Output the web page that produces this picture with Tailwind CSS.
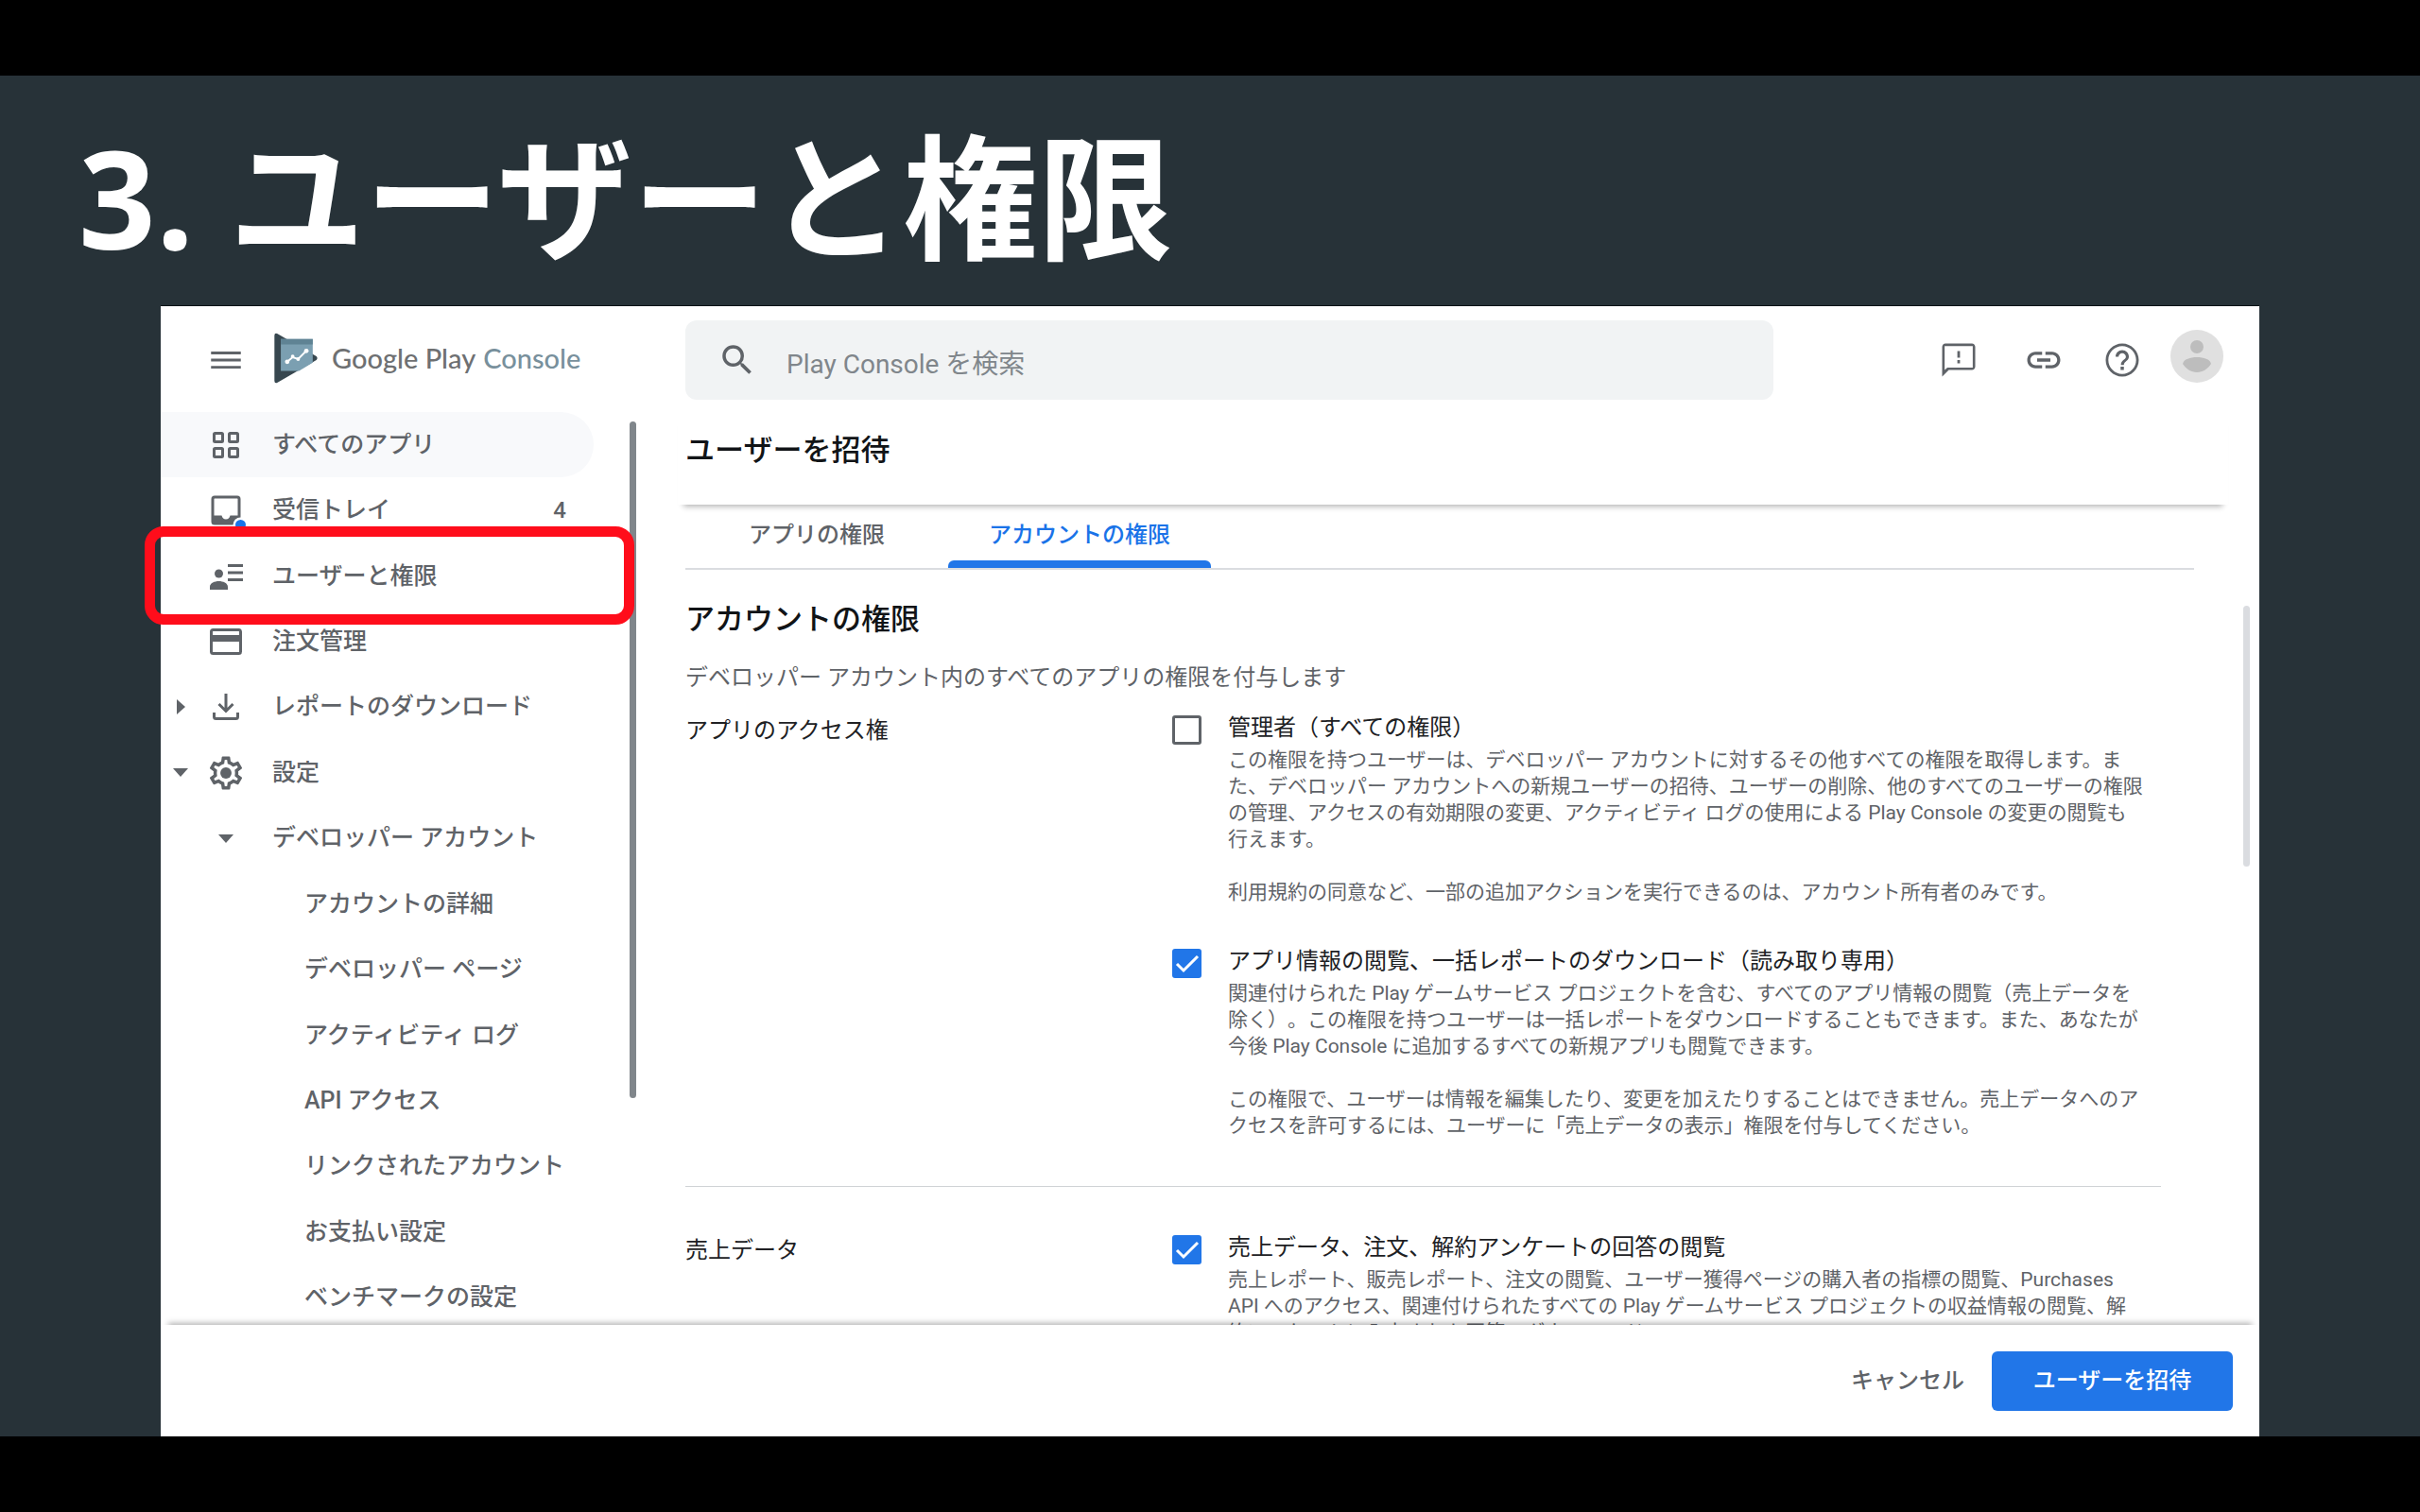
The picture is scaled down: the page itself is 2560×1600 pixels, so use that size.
<!DOCTYPE html>
<html lang="ja">
<head>
<meta charset="utf-8">
<meta name="viewport" content="width=device-width, initial-scale=1">
<title>ユーザーと権限</title>
<script src="https://cdn.jsdelivr.net/npm/@tailwindcss/browser@4"></script>
</head>
<body class="flex h-screen flex-col overflow-hidden bg-black py-20 font-['Roboto','Noto_Sans_CJK_JP',sans-serif] text-[#5f6368] [text-spacing-trim:space-all]">
<div class="flex min-h-0 flex-1 flex-col bg-[#273238]">
  <h1 class="h-[243px] shrink-0 pl-[83px] font-['Open_Sans','Noto_Sans_CJK_JP',sans-serif] text-[143px] leading-[258px] font-bold whitespace-nowrap text-white">3. ユーザーと権限</h1>

  <div class="mx-[170px] flex min-h-0 flex-1 flex-col border-t border-[#0c1216] bg-white">
    <header class="flex h-28 shrink-0 items-center pt-[2px]">
      <div class="flex w-[555px] shrink-0 items-center pl-[48px]">
        <button type="button" aria-label="メニュー"><svg class="size-[42px] fill-[#5f6368]" viewBox="0 0 24 24"><path d="M3 17.2h18v-1.7H3zM3 12.9h18v-1.7H3zM3 6.9v1.7h18V6.9z"/></svg></button>
        <a href="#" class="mb-1 ml-[28px] flex items-center font-['Lato','Noto_Sans_CJK_JP',sans-serif] text-[29px] leading-[40px] font-medium whitespace-nowrap text-[#6e7072]">
          <svg class="mr-[14px] h-[54px] w-[49px]" viewBox="0 0 50 56">
            <path d="M2 3Q2 0 5 1L48 26Q50 28 48 30L5 55Q2 56 2 53Z" fill="#37474f"/>
            <path d="M9 7h35v26L29 42H9z" fill="#7b9fb1"/><path d="M9 7h35v6H9z" fill="#5f8394"/>
            <path d="M16 32l6-5 6 2 9-9" fill="none" stroke="#fff" stroke-width="2"/>
            <g fill="#fff"><circle cx="16" cy="32" r="2.5"/><circle cx="22" cy="26" r="2"/><circle cx="28" cy="29" r="2"/><circle cx="37" cy="20" r="2.5"/></g>
          </svg>Google Play<span class="ml-2 text-[#78909c]">Console</span></a>
      </div>
      <label class="flex h-[84px] min-w-0 flex-1 items-center rounded-xl bg-[#f1f3f4] pl-[34px]">
        <svg class="size-[42px] shrink-0 fill-[#5f6368]" viewBox="0 0 24 24"><path d="M15.5 14h-.79l-.28-.27A6.47 6.47 0 0 0 16 9.5 6.5 6.5 0 1 0 9.500 16c1.610 0 3.090-.59 4.230-1.570l.27.280v.79l5 4.990L20.490 19l-4.990-5zm-6 0C7.010 14 5 11.990 5 9.500S7.010 5 9.500 5 14 7.010 14 9.500 11.990 14 9.500 14z"/></svg>
        <input type="search" placeholder="Play Console を検索" class="mt-[10px] ml-[31px] min-w-0 flex-1 bg-transparent text-[28px] leading-[40px] outline-none placeholder:text-[#80868b]">
      </label>
      <div class="flex w-[514px] shrink-0 items-center fill-[#5f6368] pl-[175px]">
        <button type="button" aria-label="フィードバック"><svg class="size-[42px]" viewBox="0 0 24 24"><path d="M20 2H4c-1.100 0-1.990.9-1.990 2L2 22l4-4h14c1.100 0 2-.9 2-2V4c0-1.100-.9-2-2-2zm0.500 14.500H5.170L3.500 18V3.500h17zM11.200 12h1.600v2h-1.600zm0-5.500h1.600v4h-1.600z"/></svg></button>
        <button type="button" aria-label="リンク" class="ml-[48px]"><svg class="size-[42px]" viewBox="0 0 24 24"><path d="M3.900 12c0-1.710 1.390-3.100 3.100-3.100h4V7H7c-2.760 0-5 2.240-5 5s2.240 5 5 5h4v-1.900H7c-1.710 0-3.100-1.390-3.100-3.100zM8 13h8v-2H8v2zm9-6h-4v1.900h4c1.710 0 3.100 1.390 3.100 3.100s-1.390 3.100-3.100 3.100h-4V17h4c2.760 0 5-2.240 5-5s-2.240-5-5-5z"/></svg></button>
        <button type="button" aria-label="ヘルプ" class="ml-[41px]"><svg class="size-[42px]" viewBox="0 0 24 24"><path d="M11 18h2v-2h-2v2zm1-16C6.480 2 2 6.480 2 12s4.480 10 10 10 10-4.480 10-10S17.520 2 12 2zm0 18.400c-4.600 0-8.400-3.800-8.400-8.400S7.400 3.600 12 3.600s8.400 3.800 8.400 8.400-3.800 8.400-8.400 8.400zM12 6c-2.210 0-4 1.790-4 4h1.800c0-1.200.98-2.200 2.200-2.200s2.200 1 2.200 2.200c0 2-3 1.750-3 5h1.800c0-2.250 3-2.500 3-5 0-2.210-1.790-4-4-4z"/></svg></button>
        <button type="button" aria-label="アカウント" class="mb-2 ml-[30px]"><svg class="size-[56px]" viewBox="0 0 56 56"><circle cx="28" cy="28" r="28" fill="#e0e0e0"/><g fill="#bdbdbd"><circle cx="28" cy="18" r="7"/><path d="M13 36c1-5 8-7 15-7s14 2 15 7c-3 5-9 9-15 9s-12-4-15-9z"/></g></svg></button>
      </div>
    </header>

    <div class="flex min-h-0 flex-1">
      <aside class="flex w-[555px] shrink-0">
        <nav class="grid h-[972px] w-[458px] auto-rows-fr text-[25px] leading-[36px] font-medium whitespace-nowrap">
          <a href="#" class="grid grid-cols-[42px_54px_1fr] items-center rounded-r-full bg-[#f8f9fb]"><span></span>
            <svg class="mx-auto size-[28px] fill-none stroke-[#5f6368] stroke-3" viewBox="0 0 28 28"><rect x="1.500" y="1.500" width="9" height="9" rx="1"/><rect x="17.500" y="1.500" width="9" height="9" rx="1"/><rect x="1.500" y="17.500" width="9" height="9" rx="1"/><rect x="17.500" y="17.500" width="9" height="9" rx="1"/></svg>
            <span class="pl-[22px]">すべてのアプリ</span></a>
          <a href="#" class="grid grid-cols-[42px_54px_1fr_auto] items-center"><span></span>
            <svg class="mx-auto size-[42px]" viewBox="-5.500 -5.500 42 42"><rect x="1.500" y="1.500" width="28" height="28" rx="2" fill="none" stroke="#5f6368" stroke-width="3"/><path d="M2 21h9q1 4 4.500 4t4.500-4h9v8H2z" fill="#5f6368"/><circle cx="31" cy="31" r="8" fill="#fff"/><circle cx="31" cy="31" r="5.500" fill="#1a73e8"/></svg>
            <span class="pl-[22px]">受信トレイ</span><span class="pr-[29px] text-[24px]">4</span></a>
          <a href="#" class="relative grid grid-cols-[42px_54px_1fr] items-center"><span></span>
            <svg class="mx-auto h-[28px] w-[35px] fill-[#5f6368]" viewBox="0 0 35 28"><circle cx="9.500" cy="11" r="4.500"/><path d="M0 28v-3c0-4 5-6 9.500-6s9.500 2 9.500 6v3zM19 1h16v3H19zM19 8.500h16v3H19zM19 16h16v3H19z"/></svg>
            <span class="pl-[22px]">ユーザーと権限</span>
            <span class="absolute -top-[18px] -left-[17px] z-10 h-[104px] w-[518px] rounded-[20px] border-[11px] border-[#ff0d1b]"></span></a>
          <a href="#" class="grid grid-cols-[42px_54px_1fr] items-center"><span></span>
            <svg class="mx-auto h-[28px] w-[34px]" viewBox="0 0 34 28"><rect x="1.500" y="1.500" width="31" height="25" rx="2" fill="none" stroke="#5f6368" stroke-width="3"/><path d="M2 7h30v7H2z" fill="#5f6368"/></svg>
            <span class="pl-[22px]">注文管理</span></a>
          <a href="#" class="grid grid-cols-[42px_54px_1fr] items-center">
            <svg class="mx-auto h-4 w-[9px] fill-[#5f6368]" viewBox="0 0 9 16"><path d="M0 0l9 8-9 8z"/></svg>
            <svg class="mx-auto size-[28px] fill-none stroke-[#5f6368] stroke-3" viewBox="0 0 28 28"><path d="M14 0v17M6.500 11l7.500 7.500L21.500 11M1.500 20v4.500q0 2 2 2h21q2 0 2-2V20"/></svg>
            <span class="pl-[22px]">レポートのダウンロード</span></a>
          <a href="#" class="grid grid-cols-[42px_54px_1fr] items-center">
            <svg class="mx-auto h-[9px] w-4 fill-[#5f6368]" viewBox="0 0 16 9"><path d="M0 0h16L8 9z"/></svg>
            <svg class="mx-auto size-[42px] fill-[#5f6368]" viewBox="0 0 24 24"><circle cx="12" cy="12" r="3.400"/><path d="M19.430 12.980c.04-.32.07-.64.07-.98s-.03-.66-.07-.98l2.110-1.650c.19-.15.24-.42.12-.64l-2-3.460c-.09-.16-.26-.25-.44-.25-.06 0-.12.010-.17.030l-2.490 1c-.52-.4-1.080-.73-1.690-.98l-.38-2.650C14.460 2.180 14.250 2 14 2h-4c-.25 0-.46.18-.49.42l-.38 2.650c-.61.25-1.170.59-1.690.98l-2.490-1c-.06-.02-.12-.03-.18-.03-.17 0-.34.09-.43.25l-2 3.460c-.13.22-.07.49.12.64l2.110 1.650c-.04.32-.07.65-.07.98s.03.66.07.98l-2.110 1.650c-.19.15-.24.42-.12.64l2 3.460c.09.16.26.25.44.25.06 0 .12-.01.17-.03l2.490-1c.52.4 1.080.73 1.690.98l.38 2.650c.03.24.24.42.49.42h4c.25 0 .46-.18.49-.42l.38-2.650c.61-.25 1.170-.59 1.690-.98l2.490 1c.06.02.12.03.18.03.17 0 .34-.09.43-.25l2-3.460c.12-.22.07-.49-.12-.64l-2.110-1.650zm-1.980-1.710c.04.31.05.52.05.73 0 .21-.02.43-.05.73l-.14 1.130.89.7 1.080.84-.7 1.210-1.270-.51-1.040-.42-.9.68c-.43.32-.84.56-1.250.73l-1.060.43-.16 1.130-.2 1.350h-1.400l-.19-1.350-.16-1.130-1.060-.43c-.43-.18-.83-.41-1.230-.71l-.91-.7-1.060.43-1.270.51-.7-1.210 1.080-.84.89-.7-.14-1.130c-.03-.31-.05-.54-.05-.74s.02-.43.05-.73l.14-1.130-.89-.7-1.080-.84.7-1.210 1.270.51 1.040.42.9-.68c.43-.32.84-.56 1.250-.73l1.060-.43.16-1.130.2-1.350h1.390l.19 1.350.16 1.130 1.060.43c.43.18.83.41 1.230.71l.91.7 1.060-.43 1.270-.51.7 1.210-1.070.85-.89.7.14 1.130z"/></svg>
            <span class="pl-[22px]">設定</span></a>
          <a href="#" class="grid grid-cols-[42px_54px_1fr] items-center"><span></span>
            <svg class="mx-auto h-[9px] w-4 fill-[#5f6368]" viewBox="0 0 16 9"><path d="M0 0h16L8 9z"/></svg>
            <span class="pl-[22px]">デベロッパー アカウント</span></a>
          <a href="#" class="flex items-center pl-[152px]">アカウントの詳細</a>
          <a href="#" class="flex items-center pl-[152px]">デベロッパー ページ</a>
          <a href="#" class="flex items-center pl-[152px]">アクティビティ ログ</a>
          <a href="#" class="flex items-center pl-[152px]">API アクセス</a>
          <a href="#" class="flex items-center pl-[152px]">リンクされたアカウント</a>
          <a href="#" class="flex items-center pl-[152px]">お支払い設定</a>
          <a href="#" class="flex items-center pl-[152px]">ベンチマークの設定</a>
        </nav>
        <div class="mt-[10px] ml-[38px] h-[716px] w-[7px] rounded-full bg-[#80868b]"></div>
      </aside>

      <main class="min-w-0 flex-1 pr-[69px] whitespace-nowrap">
        <div class="-mr-[36px] -ml-2 h-[98px] bg-white pt-[18px] pl-2 shadow-[0_8px_6px_-6px_rgba(0,0,0,0.3)]">
          <h2 class="text-[31px] leading-[46px] font-medium text-[#111417]">ユーザーを招待</h2>
        </div>
        <div role="tablist" class="flex h-[69px] border-b-2 border-[#dadce0] text-[24px] leading-[36px] font-medium">
          <button type="button" role="tab" aria-selected="false" class="flex w-[278px] justify-center pt-[14px]">アプリの権限</button>
          <button type="button" role="tab" aria-selected="true" class="flex w-[278px] flex-col items-center justify-between pt-[14px] text-[#1a73e8]">アカウントの権限<span class="h-2 w-full rounded-t-md bg-[#2176e8]"></span></button>
        </div>

        <div class="flex">
          <div class="min-w-0 flex-1">
            <h3 class="mt-[30px] text-[31px] leading-[46px] font-medium text-[#111417]">アカウントの権限</h3>
            <p class="mt-[22px] text-[24px] leading-[32px]">デベロッパー アカウント内のすべてのアプリの権限を付与します</p>

            <section class="mr-[35px] grid grid-cols-[515px_1fr] border-b border-[#d0d3d6] pt-[21px] pb-[50px]">
              <h4 class="pt-[3px] text-[24px] leading-[32px] text-[#202124]">アプリのアクセス権</h4>
              <div class="grid gap-[43px]">
                <div class="grid grid-cols-[31px_1fr] gap-x-[28px]">
                  <input id="admin" type="checkbox" class="mt-[3px] size-[31px] appearance-none rounded-[3px] border-3 border-[#5f6368]">
                  <div>
                    <label for="admin" class="block text-[24px] leading-[32px] text-[#202124]">管理者（すべての権限）</label>
                    <p class="mt-1 text-[21px] leading-[28px]">この権限を持つユーザーは、デベロッパー アカウントに対するその他すべての権限を取得します。ま<br>た、デベロッパー アカウントへの新規ユーザーの招待、ユーザーの削除、他のすべてのユーザーの権限<br>の管理、アクセスの有効期限の変更、アクティビティ ログの使用による Play Console の変更の閲覧も<br>行えます。<br><br>利用規約の同意など、一部の追加アクションを実行できるのは、アカウント所有者のみです。</p>
                  </div>
                </div>
                <div class="grid grid-cols-[31px_1fr] gap-x-[28px]">
                  <span class="mt-[3px] grid size-[31px]"><input id="view" type="checkbox" checked class="col-start-1 row-start-1 size-[31px] appearance-none rounded-[3px] bg-[#2176e8]"><svg class="pointer-events-none col-start-1 row-start-1 size-[31px] fill-none stroke-white stroke-3" viewBox="0 0 31 31"><path d="M5 16l7 7L27 8"/></svg></span>
                  <div>
                    <label for="view" class="block text-[24px] leading-[32px] text-[#202124]">アプリ情報の閲覧、一括レポートのダウンロード（読み取り専用）</label>
                    <p class="mt-1 text-[21px] leading-[28px]">関連付けられた Play ゲームサービス プロジェクトを含む、すべてのアプリ情報の閲覧（売上データを<br>除く）。この権限を持つユーザーは一括レポートをダウンロードすることもできます。また、あなたが<br>今後 Play Console に追加するすべての新規アプリも閲覧できます。<br><br>この権限で、ユーザーは情報を編集したり、変更を加えたりすることはできません。売上データへのア<br>クセスを許可するには、ユーザーに「売上データの表示」権限を付与してください。</p>
                  </div>
                </div>
              </div>
            </section>

            <section class="grid grid-cols-[515px_1fr] pt-[48px]">
              <h4 class="pt-[3px] text-[24px] leading-[32px] text-[#202124]">売上データ</h4>
              <div class="grid grid-cols-[31px_1fr] gap-x-[28px]">
                <span class="mt-[3px] grid size-[31px]"><input id="sales" type="checkbox" checked class="col-start-1 row-start-1 size-[31px] appearance-none rounded-[3px] bg-[#2176e8]"><svg class="pointer-events-none col-start-1 row-start-1 size-[31px] fill-none stroke-white stroke-3" viewBox="0 0 31 31"><path d="M5 16l7 7L27 8"/></svg></span>
                <div>
                  <label for="sales" class="block text-[24px] leading-[32px] text-[#202124]">売上データ、注文、解約アンケートの回答の閲覧</label>
                  <p class="mt-1 text-[21px] leading-[28px]">売上レポート、販売レポート、注文の閲覧、ユーザー獲得ページの購入者の指標の閲覧、Purchases<br>API へのアクセス、関連付けられたすべての Play ゲームサービス プロジェクトの収益情報の閲覧、解<br>約アンケートに入力された回答のダウンロード</p>
                </div>
              </div>
            </section>
          </div>
          <div class="mt-[38px] -mr-[59px] ml-[52px] h-[276px] w-[7px] shrink-0 rounded-full bg-[#dadce0]"></div>
        </div>
      </main>
    </div>

    <footer class="relative z-10 flex h-[118px] shrink-0 items-center justify-end bg-white pr-7 text-[24px] leading-[36px] font-medium shadow-[0_-10px_6px_-8px_rgba(0,0,0,0.3)]">
      <button type="button" class="mr-[29px]">キャンセル</button>
      <button type="button" class="h-[63px] w-[255px] rounded-md bg-[#2176e8] text-white">ユーザーを招待</button>
    </footer>
  </div>
</div>
</body>
</html>
